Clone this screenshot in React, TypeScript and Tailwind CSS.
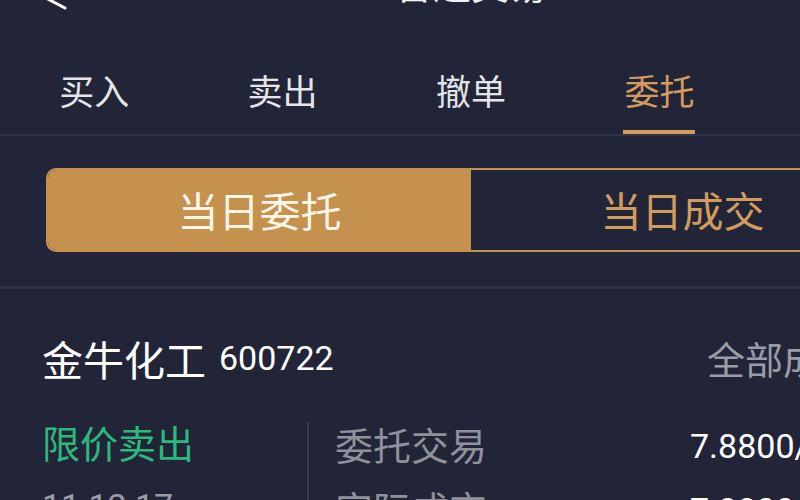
const tabs = ["买入", "卖出", "撤单", "委托"];
const active = "委托";

function BackIcon() {
  return (
    <svg width="30" height="32" viewBox="0 0 30 32" fill="none" className="text-white">
      <path d="M25 6 L4 17 L25 28" stroke="currentColor" strokeWidth="3" strokeLinecap="round" strokeLinejoin="round" />
    </svg>
  );
}

export default function App() {
  return (
    <div className="h-[500px] w-[800px] overflow-hidden bg-[#222538] font-['Noto_Sans_CJK_SC','Noto_Sans',sans-serif] text-[#f2f2f4]">
      <div className="w-[942px]">
        {/* header, mostly scrolled off the top */}
        <header className="relative -mt-[34px] flex h-[40px] items-start justify-center">
          <div className="absolute left-[40px] top-[14px]">
            <BackIcon />
          </div>
          <h1 className="text-[38px] leading-[34px]">普通交易</h1>
        </header>

        <nav className="flex h-[130px] border-b-2 border-[#2f3347]">
          {tabs.map((t) => {
            const on = t === active;
            return (
              <div key={t} className="flex flex-1 flex-col items-center justify-end">
                <span className={`mb-[22px] text-[35px] leading-[36px] ${on ? "text-[#d29c5e]" : "text-[#e4e4ea]"}`}>{t}</span>
                <span className={`h-[4px] w-[72px] ${on ? "bg-[#d29c5e]" : "bg-transparent"}`} />
              </div>
            );
          })}
          <div className="flex-1" />
        </nav>

        <div className="pt-[32px] pb-[34px] pl-[46px]">
          <div className="flex h-[84px] w-[850px] overflow-hidden rounded-[10px] border-2 border-[#c4914f]">
            <div className="flex flex-1 items-center justify-center bg-[#c4914f] text-[41px] text-[#fff6e6]">当日委托</div>
            <div className="flex flex-1 items-center justify-center text-[41px] text-[#d29c5e]">当日成交</div>
          </div>
        </div>

        <div className="h-[3px] bg-[#2f3347]" />

        <div className="flex items-center pt-[49px] pl-[42px] pr-[83px]">
          <span className="text-[41px] leading-[40px] text-white">金牛化工</span>
          <span className="ml-[13px] font-['Roboto',sans-serif] text-[34px] leading-[40px] text-white">600722</span>
          <span className="ml-auto text-[38px] leading-[40px] text-[#9a9ca8]">全部成交</span>
        </div>

        <div className="mt-[44px] flex">
          <div className="flex w-[307px] shrink-0 flex-col gap-[24px] pl-[42px]">
            <span className="text-[38px] leading-[40px] text-[#2db97c]">限价卖出</span>
            <span className="font-['Roboto',sans-serif] text-[34px] leading-[40px] text-[#9a9ca8]">11:12:17</span>
          </div>
          <div className="flex w-[383px] shrink-0 flex-col gap-[24px] border-l-2 border-[#363a4e] pl-[26px] pt-[2px]">
            <span className="text-[38px] leading-[40px] text-[#8f919c]">委托交易</span>
            <span className="text-[38px] leading-[40px] text-[#8f919c]">实际成交</span>
          </div>
          <div className="flex flex-col gap-[24px] pt-[4px] font-['Roboto',sans-serif] text-[34px] leading-[40px] text-white">
            <span>7.8800/1000</span>
            <span>7.8800/1000</span>
          </div>
        </div>
      </div>
    </div>
  );
}
